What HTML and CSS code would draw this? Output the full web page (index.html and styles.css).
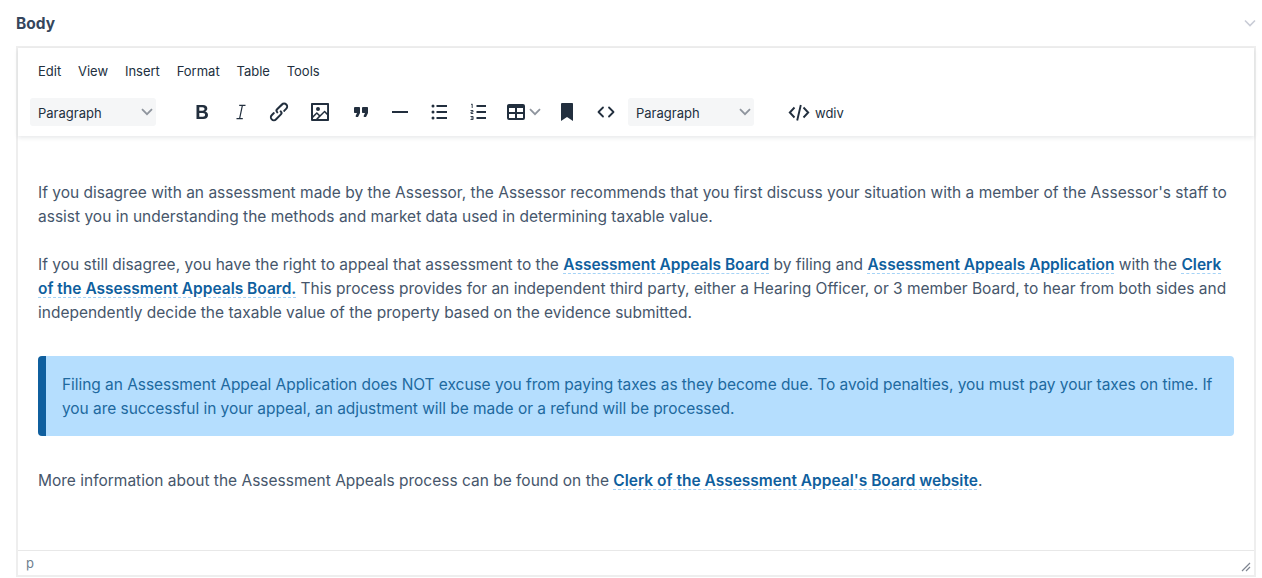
FILE: index.html
```html
<!DOCTYPE html>
<html lang="en">
<head>
<meta charset="utf-8">
<title>Body editor</title>
<link rel="stylesheet" href="styles.css">
</head>
<body>
<div class="field">
  <div class="field-head">
    <span class="field-label">Body</span>
    <svg class="field-chevron" width="12" height="8" viewBox="0 0 12 8"><path d="M1 1.500l5 5 5-5" fill="none" stroke="#c9ccd6" stroke-width="1.600"/></svg>
  </div>
  <div class="editor">
    <div class="header">
      <nav class="menubar">
        <span class="menu">Edit</span><span class="menu">View</span><span class="menu">Insert</span><span class="menu">Format</span><span class="menu">Table</span><span class="menu">Tools</span>
      </nav>
      <div class="toolbar">
        <div class="select"><span>Paragraph</span><svg width="12" height="8" viewBox="0 0 12 8"><path d="M1 1.200l5 5 5-5" fill="none" stroke="#8f959e" stroke-width="1.800"/></svg></div>
        <div class="tools tools-main">
          <button class="tool"><svg class="icon" width="24" height="24" viewBox="0 0 24 24"><path d="M6.500 5h6.500c2.700 0 4.300 1.400 4.300 3.500 0 1.400-.8 2.500-2.100 3 1.700.4 2.800 1.700 2.800 3.400 0 2.500-1.800 4.100-4.700 4.100H6.500zM9.300 7.300v3.400h3.200c1.200 0 2-.7 2-1.700s-.8-1.700-2-1.700zM9.300 12.900v3.800h3.600c1.400 0 2.200-.7 2.200-1.900s-.8-1.900-2.200-1.900z" fill-rule="evenodd"/></svg></button>
          <button class="tool tool-narrow"><svg width="24" height="24" viewBox="0 0 24 24"><path d="M10.200 5.400h6.300M7.500 18.600h6.300M13.400 5.400l-2.800 13.200" fill="none" stroke="#222f3e" stroke-width="1.200"/></svg></button>
          <button class="tool tool-narrow"><svg class="icon" width="24" height="24" viewBox="0 0 24 24"><path d="M6.200 12.300a1 1 0 0 1 1.400 1.400l-2 2a2 2 0 1 0 2.800 2.800l4.800-4.800a1 1 0 0 0 0-1.400 1 1 0 1 1 1.400-1.300 2.900 2.900 0 0 1 0 4.100l-4.800 4.800a4 4 0 1 1-5.600-5.700l2-2zm11.600-.6a1 1 0 0 1-1.400-1.400l2-2a2 2 0 1 0-2.800-2.800L10.800 10a1 1 0 0 0 0 1.400 1 1 0 1 1-1.400 1.300 2.900 2.900 0 0 1 0-4.100l4.800-4.800a4 4 0 1 1 5.600 5.700l-2 2z"/></svg></button>
          <button class="tool tool-image"><svg class="icon" width="24" height="24" viewBox="0 0 24 24"><path d="M5 15.700l3.300-3.200c.3-.3.7-.3 1 0L12 15l4.100-4c.3-.4.8-.4 1 0l2 1.900V5H5v10.700zM5 18V19h3l2.800-2.900-2-2L5 17.900zm14-3l-2.500-2.400-6.400 6.500H19v-4zM4 3h16c.6 0 1 .4 1 1v16c0 .6-.4 1-1 1H4a1 1 0 0 1-1-1V4c0-.6.4-1 1-1zm6 8a2 2 0 1 0 0-4 2 2 0 0 0 0 4z" fill-rule="evenodd"/></svg></button>
          <button class="tool tool-gap"><svg class="icon" width="24" height="24" viewBox="0 0 24 24"><path d="M7.500 17h.9c.4 0 .7-.2.9-.6L11 13V8c0-.6-.4-1-1-1H6a1 1 0 0 0-1 1v4c0 .6.4 1 1 1h2l-1.300 2.700a1 1 0 0 0 .8 1.300zm8 0h.9c.4 0 .7-.2.9-.6L19 13V8c0-.6-.4-1-1-1h-4a1 1 0 0 0-1 1v4c0 .6.4 1 1 1h2l-1.300 2.700a1 1 0 0 0 .8 1.300z"/></svg></button>
          <button class="tool"><svg width="24" height="24" viewBox="0 0 24 24"><path d="M4 12h16" stroke="#222f3e" stroke-width="2"/></svg></button>
          <button class="tool"><svg width="24" height="24" viewBox="0 0 24 24"><circle cx="6" cy="6" r="1.500" fill="#222f3e"/><circle cx="6" cy="12" r="1.500" fill="#222f3e"/><circle cx="6" cy="18" r="1.500" fill="#222f3e"/><path d="M9.500 6H20M9.500 12H20M9.500 18H20" stroke="#222f3e" stroke-width="2"/></svg></button>
          <button class="tool"><svg width="24" height="24" viewBox="0 0 24 24"><path d="M10.500 6H20M10.500 12H20M10.500 18H20" stroke="#222f3e" stroke-width="2"/><path d="M5 4.500l1.200-.5v4M4.500 10.500h2.500V12H5v1.500h2.300M4.500 16.500h2.600v3H4.500M5 18h2" fill="none" stroke="#222f3e" stroke-width=".9"/></svg></button>
          <button class="tool tool-split"><svg class="icon" width="24" height="24" viewBox="0 0 24 24"><path d="M19 4a2 2 0 0 1 2 2v12a2 2 0 0 1-2 2H5a2 2 0 0 1-2-2V6c0-1.100.9-2 2-2h14zM5 14v4h6v-4H5zm14 0h-6v4h6v-4zm0-6h-6v4h6V8zM5 12h6V8H5v4z" fill-rule="evenodd"/></svg><svg width="12" height="8" viewBox="0 0 12 8"><path d="M1 1.200l5 5 5-5" fill="none" stroke="#8f959e" stroke-width="1.800"/></svg></button>
          <button class="tool"><svg class="icon" width="24" height="24" viewBox="0 0 24 24"><path d="M6 4v17l6-4 6 4V4c0-.6-.4-1-1-1H7a1 1 0 0 0-1 1z"/></svg></button>
          <button class="tool"><svg width="24" height="24" viewBox="0 0 24 24"><path d="M9 7.500L4.500 12 9 16.500M15 7.500l4.500 4.500-4.500 4.500" fill="none" stroke="#222f3e" stroke-width="1.800" stroke-linecap="round" stroke-linejoin="round"/></svg></button>
        </div>
        <div class="select select-second"><span>Paragraph</span><svg width="12" height="8" viewBox="0 0 12 8"><path d="M1 1.200l5 5 5-5" fill="none" stroke="#8f959e" stroke-width="1.800"/></svg></div>
        <button class="tool-text"><svg width="22" height="24" viewBox="0 0 22 24"><path d="M6.500 7.500L1.800 12.500l4.700 5M15.500 7.500l4.700 5-4.700 5M12.800 5L9.200 20.500" fill="none" stroke="#222f3e" stroke-width="1.900"/></svg><span>wdiv</span></button>
      </div>
    </div>
    <div class="content">
      <p>If you disagree with an assessment made by the Assessor, the Assessor recommends that you first discuss your situation with a member of the Assessor's staff to assist you in understanding the methods and market data used in determining taxable value.</p>
      <p>If you still disagree, you have the right to appeal that assessment to the <a href="#">Assessment Appeals Board</a> by filing and <a href="#">Assessment Appeals Application</a> with the <a href="#">Clerk of the Assessment Appeals Board.</a> This process provides for an independent third party, either a Hearing Officer, or 3 member Board, to hear from both sides and independently decide the taxable value of the property based on the evidence submitted.</p>
      <div class="callout">Filing an Assessment Appeal Application does NOT excuse you from paying taxes as they become due. To avoid penalties, you must pay your taxes on time. If you are successful in your appeal, an adjustment will be made or a refund will be processed.</div>
      <p>More information about the Assessment Appeals process can be found on the <a href="#">Clerk of the Assessment Appeal's Board website</a>.</p>
    </div>
    <div class="statusbar">
      <span>p</span>
      <svg class="resize" width="10" height="10" viewBox="0 0 10 10"><path d="M9 1L1 9M9 5L5 9" stroke="#7f8591" stroke-width="1.200"/></svg>
    </div>
  </div>
</div>
</body>
</html>
```
FILE: styles.css
```css
* { box-sizing: border-box; }
html, body { margin: 0; height: 578px; overflow: hidden; background: #fff; }
body { font-family: "Inter", "Liberation Sans", sans-serif; color: #46566b; }
.field { padding: 13px 6px 0 16px; }
.field-head { display: flex; justify-content: space-between; align-items: center; height: 20px; margin-bottom: 13px; }
.field-label { font-size: 15.5px; font-weight: 700; color: #35465c; }
.editor { height: 531px; border: 2px solid #eeeeee; display: flex; flex-direction: column; }
.header { height: 88px; padding: 12px 4px 0 12px; box-shadow: 0 2px 4px rgba(34, 47, 62, .1); position: relative; background: #fff; }
.menubar { display: flex; gap: 16.8px; height: 22px; align-items: center; padding-left: 8px; font-size: 13px; color: #222f3e; }
.toolbar { display: flex; align-items: center; margin-top: 16px; height: 28px; }
.select { width: 126px; height: 28px; background: #f5f6f7; border-radius: 3px; display: flex; justify-content: space-between; align-items: center; padding: 2px 2px 0 8px; font-size: 13px; color: #222f3e; }
.select svg { margin: -2px 1px 0 0; }
.icon { fill: #222f3e; }
.tools { display: flex; align-items: center; }
.tools-main { margin-left: 26.5px; }
.tool { width: 39px; height: 28px; border: 0; padding: 0; background: none; display: flex; align-items: center; justify-content: center; gap: 1px; }
.tool-narrow { width: 38px; }
.tool-image { margin-left: 2.5px; }
.tool-gap { margin-left: 2.5px; }
.tool-split { width: 49.5px; }
.select-second { margin-left: 3px; }
.tool-text { margin-left: 34px; border: 0; padding: 0; background: none; display: flex; align-items: center; gap: 5px; font: 13px "Inter", "Liberation Sans", sans-serif; color: #222f3e; }
.tool-text span { padding-top: 1px; }
.content { flex: 1; padding: 45px 20px 0 20px; font-size: 15.5px; line-height: 24px; }
.content p { margin: 0 0 24px; }
.content a { color: #0f5f9e; font-weight: 600; text-decoration: underline dashed #a5d3f7 1px; text-underline-offset: 3px; }
.callout { margin: 31px 0 33px; padding: 17px 16px 15px; background: #b5defe; color: #20699f; border-left: 8px solid #0f5f9e; border-radius: 4px; letter-spacing: -.05px; }
.statusbar { height: 25px; border-top: 1px solid #e8e8e8; display: flex; justify-content: space-between; align-items: center; padding: 0 3px 0 8px; font-size: 13px; color: #6f7f8f; }
.resize { align-self: flex-end; margin-bottom: 3px; }
```
